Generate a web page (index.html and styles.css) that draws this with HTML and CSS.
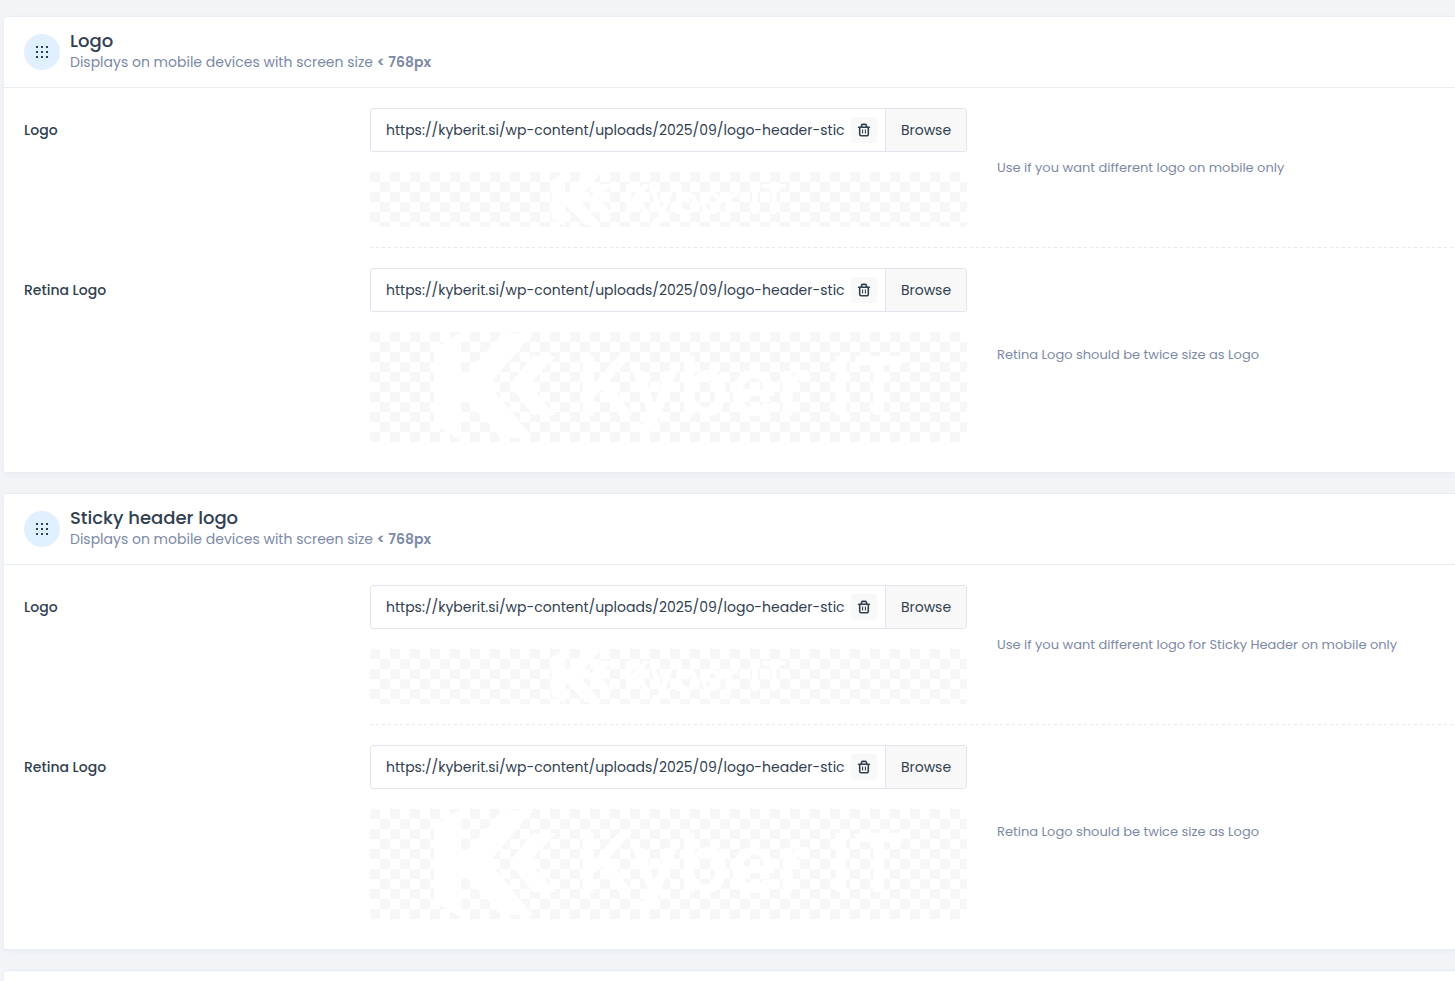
FILE: index.html
```
<!DOCTYPE html>
<html lang="en">
<head>
<meta charset="utf-8">
<meta name="viewport" content="width=device-width, initial-scale=1">
<title>Mobile logo options</title>
<link rel="stylesheet" href="styles.css">
</head>
<body>
<svg class="sprite" aria-hidden="true">
  <symbol id="dots" viewBox="0 0 12 12">
    <path fill="currentColor" d="M0 0h2v2H0zM5 0h2v2H5zM10 0h2v2h-2zM0 5h2v2H0zM5 5h2v2H5zM10 5h2v2h-2zM0 10h2v2H0zM5 10h2v2H5zM10 10h2v2h-2z"/>
  </symbol>
  <symbol id="trash" viewBox="0 0 14 14">
    <g fill="none" stroke="currentColor" stroke-width="1.6" stroke-linecap="round" stroke-linejoin="round">
      <path d="M1.6 4.2h10.8M2.7 4.2v7a1.6 1.6 0 0 0 1.6 1.6h5.4a1.6 1.6 0 0 0 1.6-1.6v-7M4.5 4V2.6a1.2 1.2 0 0 1 1.2-1.2h2.6a1.2 1.2 0 0 1 1.2 1.2V4"/>
      <path stroke-width="1.1" stroke-linecap="butt" d="M5.6 6.5v4M8.4 6.5v4"/>
    </g>
  </symbol>
  <symbol id="brand" viewBox="0 0 480 110">
    <path fill="#fff" d="M5 17 32 0V40H39L74 1H104L60 53 104 106H72L39 70H32V109L5 92ZM104 24H127L100 53 127 83H104L80 53Z"/>
    <text class="brand-text" x="148" y="83">Kyber IT</text>
  </symbol>
</svg>

<main class="page">
  <section class="card">
    <header class="card-header">
      <span class="card-icon"><svg width="12" height="12" aria-hidden="true"><use href="#dots"/></svg></span>
      <div class="card-heading">
        <h2 class="card-title">Logo</h2>
        <p class="card-subtitle">Displays on mobile devices with screen size <b>&lt; 768px</b></p>
      </div>
    </header>
    <div class="row">
      <label class="row-label" for="logo">Logo</label>
      <div class="row-content">
        <div>
          <div class="upload">
            <input class="upload-input" id="logo" type="text" value="https://kyberit.si/wp-content/uploads/2025/09/logo-header-stic">
            <button class="upload-remove" type="button" aria-label="Remove"><svg width="14" height="14" aria-hidden="true"><use href="#trash"/></svg></button>
            <button class="upload-browse" type="button">Browse</button>
          </div>
          <div class="preview"><svg width="240" height="55"><use href="#brand"/></svg></div>
        </div>
        <p class="row-desc">Use if you want different logo on mobile only</p>
      </div>
    </div>
    <div class="row">
      <label class="row-label" for="retina">Retina Logo</label>
      <div class="row-content">
        <div>
          <div class="upload">
            <input class="upload-input" id="retina" type="text" value="https://kyberit.si/wp-content/uploads/2025/09/logo-header-stic">
            <button class="upload-remove" type="button" aria-label="Remove"><svg width="14" height="14" aria-hidden="true"><use href="#trash"/></svg></button>
            <button class="upload-browse" type="button">Browse</button>
          </div>
          <div class="preview"><svg width="480" height="110"><use href="#brand"/></svg></div>
        </div>
        <p class="row-desc">Retina Logo should be twice size as Logo</p>
      </div>
    </div>
  </section>

  <section class="card">
    <header class="card-header">
      <span class="card-icon"><svg width="12" height="12" aria-hidden="true"><use href="#dots"/></svg></span>
      <div class="card-heading">
        <h2 class="card-title">Sticky header logo</h2>
        <p class="card-subtitle">Displays on mobile devices with screen size <b>&lt; 768px</b></p>
      </div>
    </header>
    <div class="row">
      <label class="row-label" for="sticky-logo">Logo</label>
      <div class="row-content">
        <div>
          <div class="upload">
            <input class="upload-input" id="sticky-logo" type="text" value="https://kyberit.si/wp-content/uploads/2025/09/logo-header-stic">
            <button class="upload-remove" type="button" aria-label="Remove"><svg width="14" height="14" aria-hidden="true"><use href="#trash"/></svg></button>
            <button class="upload-browse" type="button">Browse</button>
          </div>
          <div class="preview"><svg width="240" height="55"><use href="#brand"/></svg></div>
        </div>
        <p class="row-desc">Use if you want different logo for Sticky Header on mobile only</p>
      </div>
    </div>
    <div class="row">
      <label class="row-label" for="sticky-retina">Retina Logo</label>
      <div class="row-content">
        <div>
          <div class="upload">
            <input class="upload-input" id="sticky-retina" type="text" value="https://kyberit.si/wp-content/uploads/2025/09/logo-header-stic">
            <button class="upload-remove" type="button" aria-label="Remove"><svg width="14" height="14" aria-hidden="true"><use href="#trash"/></svg></button>
            <button class="upload-browse" type="button">Browse</button>
          </div>
          <div class="preview"><svg width="480" height="110"><use href="#brand"/></svg></div>
        </div>
        <p class="row-desc">Retina Logo should be twice size as Logo</p>
      </div>
    </div>
  </section>

  <section class="card card-next"></section>
</main>
</body>
</html>
```
FILE: styles.css
```
* {
  box-sizing: border-box;
}

body {
  margin: 0;
  background: #f1f5f8;
  color: #304050;
  font: 14px/20px Poppins, Inter, sans-serif;
}

h2,
p {
  margin: 0;
}

svg {
  display: block;
}

.sprite {
  position: absolute;
  width: 0;
  height: 0;
}

.page {
  display: flex;
  flex-direction: column;
  gap: 20px;
  min-height: 100vh;
  padding: 16px 0 0 4px;
}

.card {
  border: 1px solid #e9ecf4;
  border-width: 1px 0;
  border-radius: 3px 0 0 3px;
  background: #fff;
  background-clip: padding-box;
  box-shadow: 0 2px 6px rgba(40, 60, 80, 0.04);
  padding-bottom: 10px;
}

.card-next {
  flex: 1;
  border-bottom: 0;
  border-bottom-left-radius: 0;
}

.card-header {
  display: flex;
  align-items: center;
  gap: 10px;
  height: 71px;
  padding-left: 20px;
  border-bottom: 1px solid #e9ecf1;
}

.card-icon {
  display: grid;
  place-items: center;
  width: 36px;
  height: 36px;
  border-radius: 50%;
  background: #e1f0ff;
}

.card-heading {
  padding-bottom: 2px;
}

.card-title {
  font-size: 18px;
  font-weight: 500;
  line-height: 22px;
}

.card-subtitle {
  color: #7c89a6;
}

.card-subtitle b {
  font-weight: 600;
}

.row {
  display: grid;
  grid-template-columns: 346px minmax(0, 1fr);
  padding-left: 20px;
}

.row-label {
  padding-top: 32px;
  font-weight: 500;
}

.row-content {
  display: grid;
  grid-template-columns: minmax(0, 597fr) minmax(0, 458fr);
  align-items: center;
  column-gap: 30px;
  padding: 20px 0;
}

.row + .row .row-label {
  padding-top: 33px;
}

.row + .row .row-content {
  padding-top: 21px;
  background: repeating-linear-gradient(90deg, #e6e7ec 0 3px, transparent 3px 6px) 0 0 / 100% 1px no-repeat;
}

.row-desc {
  color: #7c89a6;
  font-size: 13px;
}

.upload {
  display: flex;
  align-items: center;
  height: 44px;
  border: 1px solid #e1e5ed;
  border-radius: 3px;
  overflow: hidden;
}

.upload-input {
  flex: 1;
  min-width: 0;
  height: 100%;
  margin-right: 6px;
  padding: 0 0 0 15px;
  border: 0;
  background: none;
  color: inherit;
  font: inherit;
}

.upload-remove {
  display: grid;
  place-items: center;
  width: 26px;
  height: 26px;
  margin-right: 8px;
  padding: 0;
  border: 0;
  border-radius: 3px;
  background: #f8f8f8;
  color: #304050;
}

.upload-browse {
  width: 81px;
  height: 100%;
  padding: 0;
  border: 0;
  border-left: 1px solid #e1e5ed;
  background: #f8f8f8;
  color: inherit;
  font: inherit;
}

.preview {
  display: flex;
  justify-content: center;
  margin-top: 20px;
  border-radius: 3px;
  background: repeating-conic-gradient(#fff 0 25%, #f7f7f7 0 50%) 0 0 / 20px 20px;
}

.brand-text {
  fill: #fff;
  font: 600 81px Inter, sans-serif;
}
```
